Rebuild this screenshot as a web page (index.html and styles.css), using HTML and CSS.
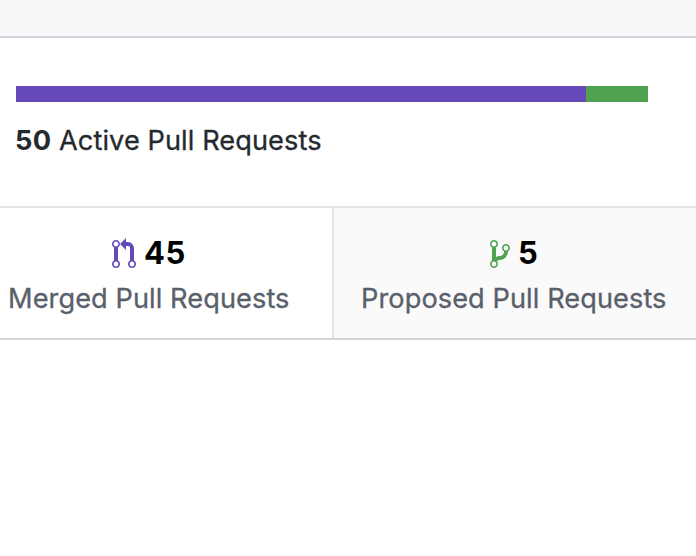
FILE: index.html
```html
<!DOCTYPE html>
<html lang="en">
<head>
<meta charset="utf-8">
<title>Pull Requests</title>
<link rel="stylesheet" href="styles.css">
</head>
<body>
<header class="box-header"></header>
<section class="overview">
  <div class="progress"><span class="merged"></span><span class="proposed"></span></div>
  <p class="active-label"><strong>50</strong> <span>Active Pull Requests</span></p>
</section>
<nav class="summary">
  <a class="stat stat-merged">
    <span class="count"><svg width="24" height="32" viewBox="0 0 12 16"><path fill="currentColor" fill-rule="evenodd" d="M11 11.28V5c-.03-.78-.34-1.47-.94-2.06C9.46 2.35 8.78 2.03 8 2H7V0L4 3l3 3V4h1c.27.02.48.11.69.31.21.2.3.42.31.69v6.28A1.993 1.993 0 0 0 10 15a1.993 1.993 0 0 0 1-3.72zm-1 2.92c-.66 0-1.2-.55-1.2-1.2 0-.65.55-1.2 1.2-1.2.65 0 1.2.55 1.2 1.2 0 .65-.55 1.2-1.2 1.2zM4 3c0-1.11-.89-2-2-2a1.993 1.993 0 0 0-1 3.72v6.56A1.993 1.993 0 0 0 2 15a1.993 1.993 0 0 0 1-3.72V4.72c.59-.34 1-.98 1-1.72zm-.8 10c0 .66-.55 1.2-1.2 1.2-.65 0-1.2-.55-1.2-1.2 0-.65.55-1.2 1.2-1.2.65 0 1.2.55 1.2 1.2zM2 4.2C1.34 4.2.8 3.65.8 3c0-.65.55-1.2 1.2-1.2.65 0 1.2.55 1.2 1.2 0 .65-.55 1.2-1.2 1.2z"/></svg><b>45</b></span>
    <span class="label">Merged Pull Requests</span>
  </a>
  <a class="stat stat-proposed">
    <span class="count"><svg width="20" height="32" viewBox="0 0 10 16"><path fill="currentColor" fill-rule="evenodd" d="M10 5c0-1.11-.89-2-2-2a1.993 1.993 0 0 0-1 3.72v.3c-.02.52-.23.98-.63 1.38-.4.4-.86.61-1.38.63-.83.02-1.48.16-2 .45V4.72a1.993 1.993 0 0 0-1-3.72C.88 1 0 1.89 0 3a2 2 0 0 0 1 1.72v6.56c-.59.35-1 .99-1 1.72 0 1.11.89 2 2 2 1.11 0 2-.89 2-2 0-.53-.2-1-.53-1.36.09-.06.48-.41.59-.47.25-.11.56-.17.94-.17 1.05-.05 1.95-.45 2.75-1.25S8.95 7.77 9 6.73h-.02C9.59 6.37 10 5.73 10 5zM2 1.8c.66 0 1.2.55 1.2 1.2 0 .65-.55 1.2-1.2 1.2C1.35 4.2.8 3.65.8 3c0-.65.55-1.2 1.2-1.2zm0 12.41c-.66 0-1.2-.55-1.2-1.2 0-.65.55-1.2 1.2-1.2.65 0 1.2.55 1.2 1.2 0 .65-.55 1.2-1.2 1.2zm6-8c-.66 0-1.2-.55-1.2-1.2 0-.65.55-1.2 1.2-1.2.65 0 1.2.55 1.2 1.2 0 .65-.55 1.2-1.2 1.2z"/></svg><b>5</b></span>
    <span class="label">Proposed Pull Requests</span>
  </a>
</nav>
</body>
</html>
```
FILE: styles.css
```css
* { box-sizing: border-box; }
body {
  margin: 0;
  background: #fff;
  color: #24292e;
  font-family: Inter, sans-serif;
  overflow: hidden;
}
.box-header {
  height: 38px;
  background: #f6f8fa;
  border-bottom: 2px solid #d1d5da;
}
.overview {
  height: 168px;
  padding: 48px 48px 0 15px;
}
.progress {
  display: flex;
  height: 16px;
  margin-left: 1px;
}
.merged {
  width: 570px;
  background: #6549b9;
}
.proposed {
  flex: 1;
  background: #51a351;
}
.active-label {
  margin: 17px 0 0;
  font-size: 27.2px;
  line-height: 43px;
  letter-spacing: 0.07px;
  -webkit-text-stroke: 0.3px currentColor;
  white-space: pre;
}
.active-label strong {
  font-weight: 700;
  letter-spacing: 0.3px;
  -webkit-text-stroke: 0;
}
.summary {
  display: grid;
  grid-template-columns: 334px 362px;
  height: 134px;
  border-top: 2px solid #e1e4e8;
  border-bottom: 2px solid #d1d5da;
}
.stat {
  display: flex;
  flex-direction: column;
  padding-top: 23px;
  white-space: nowrap;
}
.stat-merged {
  padding-left: 8px;
  border-right: 2px solid #e1e4e8;
}
.stat-proposed {
  padding-left: 27px;
  background: #fafafa;
}
.count {
  display: flex;
  align-items: center;
  height: 46px;
  gap: 8px;
  font-size: 31px;
  letter-spacing: 0.6px;
}
.stat-merged .count { padding-left: 104px; }
.stat-proposed .count { padding-left: 129px; }
.count svg { display: block; }
.stat-merged svg { color: #6549b9; }
.stat-proposed svg { color: #51a351; }
.count b {
  color: #000;
  font-weight: 700;
  line-height: 44px;
  padding-bottom: 2px;
}
.label {
  color: #586069;
  font-size: 27.2px;
  line-height: 43px;
  letter-spacing: 0.07px;
  -webkit-text-stroke: 0.3px currentColor;
}
```
